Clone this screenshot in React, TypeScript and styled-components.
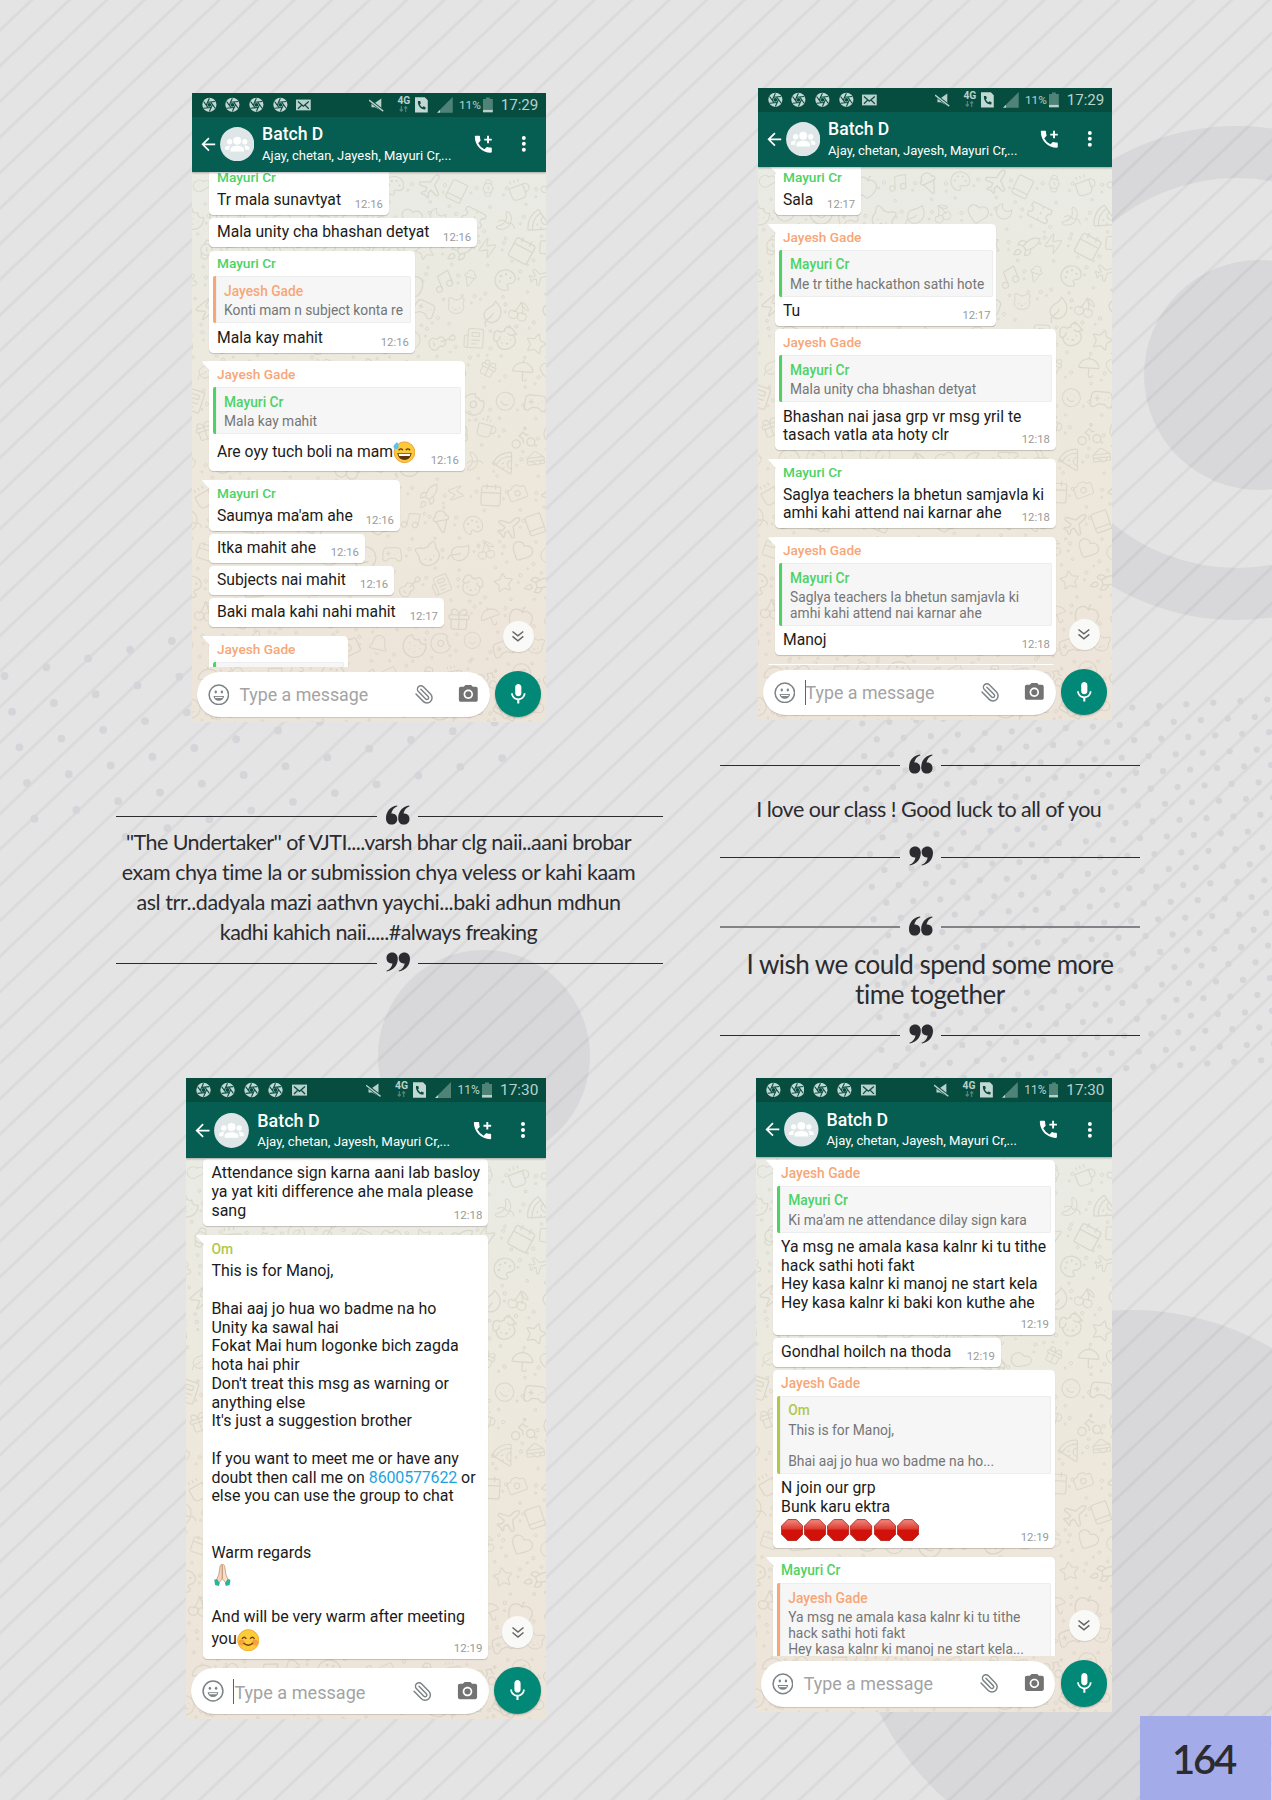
import React from "react";
import styled, { createGlobalStyle, css } from "styled-components";
import {
  Apple, Banana, Bell, Bike, Book, Calendar, Camera, Cat, Cherry, Cloud, Coffee, Compass, Cookie, Dog, Donut,
  Gamepad2, Gift, Guitar, Heart, IceCreamCone, Leaf, Moon, Music, Newspaper, Palette, Paperclip, Pizza, Plane,
  Rocket, Sandwich, Smile, Star, Ticket, Umbrella, Watch, Zap,
} from "lucide-react";
import { MdAddIcCall, MdArrowBack, MdCameraAlt, MdMic } from "react-icons/md";

const GlobalStyle = createGlobalStyle`
  body { margin: 0; background: #e4e4e4; }
  *, *::before, *::after { box-sizing: border-box; }
`;

/* Phone measurements are written in device units; --u is the size of one unit in px. */
const u = (n: number) => `calc(var(--u) * ${n})`;

const GREEN = "#4dd264";
const ORANGE = "#f7a677";
const LIME = "#b0c84a";

/* ---------- page ---------- */

const Page = styled.main`
  position: relative;
  width: 1272px;
  height: 1800px;
  overflow: hidden;
  display: grid;
  grid-template-columns: 700px 572px;
  background: #e4e4e4;
  font-family: Roboto, "Liberation Sans", sans-serif;
`;

const Backdrop = styled.svg`
  position: absolute;
  inset: 0;
`;

const Column = styled.section`
  position: relative;
  display: flex;
  flex-direction: column;
  align-items: flex-start;
`;

const PageNumber = styled.div`
  width: 131px;
  height: 84px;
  margin: auto 0 0 440px;
  display: flex;
  align-items: center;
  justify-content: center;
  background: #a4abe9;
  color: #2b2b30;
  font: 600 40px/84px Lato, sans-serif;
  letter-spacing: -2.2px;
  padding: 1px 4px 0 0;
`;

function Background() {
  const stripes: React.ReactNode[] = [];
  for (let y = -40; y < 3100; y += 35.62) {
    const y0 = y + 34.6;
    stripes.push(<line key={y} x1={-10} y1={y0 + 9.5} x2={1290} y2={y0 - 1290 * 0.95} />);
  }
  const dots: React.ReactNode[] = [];
  for (let b = 0; b <= 5; b++) {
    for (let a = b === 5 ? 2 : -1; a <= 11; a++) {
      dots.push(<circle key={`l${a}-${b}`} cx={4.5 + a * 41.83 + b * 7.5} cy={676 - a * 8.75 + b * 35.67} r={3.9} />);
    }
  }
  for (let b = 0; b <= 22; b++) {
    const half = b % 2;
    const row = (b - half) / 2;
    for (let a = 0; a <= 16; a++) {
      dots.push(
        <circle key={`r${a}-${b}`} cx={862.3 + a * 27 + row * 1.9 + half * 14.5} cy={723.5 - a * 1.6 + row * 32.65 + half * 15.9} r={3.1} />,
      );
    }
  }
  return (
    <Backdrop width="1272" height="1800" viewBox="0 0 1272 1800">
      <g fill="#d8d8da">
        <circle cx="1259" cy="375" r="115" />
        <circle cx="484" cy="1056" r="106" />
        <circle cx="1131" cy="1590" r="280" />
      </g>
      <circle cx="1237" cy="373" r="221" fill="none" stroke="#d8d8da" strokeWidth="52" />
      <g stroke="#00000f" strokeOpacity="0.04" strokeWidth="3">{stripes}</g>
      <g fill="#d5d5d9">{dots}</g>
    </Backdrop>
  );
}

/* ---------- quotes ---------- */

const QuoteBlock = styled.blockquote<{ $left: number; $top: number; $width: number; $height: number }>`
  width: ${(p) => p.$width}px;
  height: ${(p) => p.$height}px;
  margin: ${(p) => p.$top}px 0 0 ${(p) => p.$left}px;
  display: flex;
  flex-direction: column;
  justify-content: space-between;
  color: #2b2b30;
`;

const RuleRow = styled.div<{ $lead: number }>`
  display: grid;
  grid-template-columns: ${(p) => p.$lead}px 24px 1fr;
  column-gap: 8.5px;
  align-items: center;
  height: 20px;
  svg { margin-top: -2px; }
`;

const Rule = styled.span<{ $soft?: boolean }>`
  height: ${(p) => (p.$soft ? 2 : 1)}px;
  background: ${(p) => (p.$soft ? "#838287" : "#2b2b30")};
`;

const QuoteText = styled.div<{ $size: number; $pull: number; $lift: number }>`
  display: flex;
  flex-direction: column;
  align-items: center;
  font-family: Lato, sans-serif;
  font-size: ${(p) => p.$size}px;
  line-height: 30px;
  padding-right: ${(p) => p.$pull}px;
  padding-bottom: ${(p) => p.$lift}px;
`;

const QuoteLine = styled.span<{ $track: number }>`
  letter-spacing: ${(p) => p.$track}px;
  white-space: pre;
`;

function Mark({ close }: { close?: boolean }) {
  const shape = "M11 0.6 C4 1.6 0 7 0 13.2 C0 17.2 2.3 19.6 5.7 19.6 C9 19.6 11.3 17.3 11.3 14 C11.3 10.7 9.2 8.6 6.4 8.5 C6 8.5 5.6 8.5 5.3 8.6 C6 5 8 2.4 11.4 1.2 Z";
  return (
    <svg width="24" height="20" viewBox="0 0 24 20">
      <g fill="#2b2b30" transform={close ? "rotate(180 12 10)" : undefined}>
        <path d={shape} />
        <path d={shape} transform="translate(12.2 0)" />
      </g>
    </svg>
  );
}

interface QuoteProps {
  left: number; top: number; width: number; height: number; lead: number;
  size: number; pull: number; lift: number; soft?: boolean;
  lines: [string, number][];
}

function Quote(p: QuoteProps) {
  return (
    <QuoteBlock $left={p.left} $top={p.top} $width={p.width} $height={p.height}>
      <RuleRow $lead={p.lead}><Rule $soft={p.soft} /><Mark /><Rule $soft={p.soft} /></RuleRow>
      <QuoteText $size={p.size} $pull={p.pull} $lift={p.lift}>
        {p.lines.map(([t, track]) => <QuoteLine key={t} $track={track}>{t}</QuoteLine>)}
      </QuoteText>
      <RuleRow $lead={p.lead}><Rule /><Mark close /><Rule /></RuleRow>
    </QuoteBlock>
  );
}

/* ---------- phone ---------- */

const Phone = styled.article<{ $w: number; $h: number; $left: number; $top: number }>`
  --u: ${(p) => p.$w / 360}px;
  position: relative;
  width: ${(p) => p.$w}px;
  height: ${(p) => p.$h}px;
  margin: ${(p) => p.$top}px 0 0 ${(p) => p.$left}px;
  flex: none;
  display: flex;
  flex-direction: column;
  overflow: hidden;
  background: linear-gradient(#e9ebe4 12%, #eee8dc 60%, #ede4d9);
`;

const Doodles = styled.svg`
  position: absolute;
  inset: 0;
  width: 100%;
  height: 100%;
`;

const StatusBar = styled.div`
  position: relative;
  flex: none;
  height: ${u(24)};
  display: flex;
  align-items: center;
  padding: 0 ${u(8)} 0 ${u(10)};
  background: #064d40;
  color: #b9d1cb;
`;

const StatusIcon = styled.svg<{ $w: number; $gap: number }>`
  width: ${(p) => u(p.$w)};
  height: ${u(16)};
  margin-left: ${(p) => u(p.$gap)};
  flex: none;
`;

const Network = styled.div`
  margin: 0 ${u(5)} 0 ${u(14)};
  width: ${u(13)};
  display: flex;
  flex-direction: column;
  align-items: center;
  font-weight: 700;
  font-size: ${u(10.4)};
  line-height: ${u(10)};
  padding-bottom: ${u(1.5)};
`;

const StatusText = styled.span<{ $size: number; $left: number; $w: number }>`
  font-size: ${(p) => u(p.$size)};
  width: ${(p) => u(p.$w)};
  margin-left: ${(p) => u(p.$left)};
  white-space: nowrap;
`;

const AppBar = styled.header`
  position: relative;
  flex: none;
  height: ${u(56)};
  display: flex;
  align-items: center;
  padding: 0 ${u(12.6)} 0 ${u(6)};
  background: #055e51;
  color: #fff;
  box-shadow: 0 1px 2px rgba(0, 0, 0, 0.3);
  z-index: 1;
`;

const BarIcon = styled.span<{ $size: number; $gap?: number }>`
  display: flex;
  margin-left: ${(p) => u(p.$gap ?? 0)};
  svg { width: ${(p) => u(p.$size)}; height: ${(p) => u(p.$size)}; display: block; }
`;

const Titles = styled.div`
  flex: 1;
  min-width: 0;
  margin-left: ${u(8)};
  padding-top: ${u(2)};
  white-space: nowrap;
`;

const Title = styled.div`
  font-weight: 500;
  font-size: ${u(17.9)};
  line-height: ${u(22)};
`;

const Members = styled.div`
  font-size: ${u(13.25)};
  line-height: ${u(20)};
`;

const Thread = styled.div<{ $offset: number; $stretch: number }>`
  position: relative;
  flex: 1;
  min-height: 0;
  overflow: hidden;
  padding-left: ${u(17.4)};
  display: flex;
  flex-direction: column;
  align-items: flex-start;
  gap: ${(p) => p.$stretch}px;
  > :first-child { margin-top: ${(p) => p.$offset}px; }
`;

const Bubble = styled.div<{ $w: number; $tail?: boolean }>`
  position: relative;
  flex: none;
  width: ${(p) => p.$w}px;
  margin-top: ${(p) => u(p.$tail ? 8.4 : 2.7)};
  background: #fff;
  border-radius: ${(p) => (p.$tail ? 0 : u(4.5))} ${u(4.5)} ${u(4.5)} ${u(4.5)};
  box-shadow: 0 1px 1px rgba(0, 0, 0, 0.18);
  ${(p) => p.$tail && css`
    &::before {
      content: "";
      position: absolute;
      top: 0;
      left: ${u(-7)};
      width: ${u(7.5)};
      height: ${u(10.5)};
      background: linear-gradient(45deg, #c9c9c0 42%, #fff 52%);
      clip-path: polygon(0 0, 100% 0, 100% 100%, 80% 78%, 5% 14%);
    }
  `}
`;

const Sender = styled.div<{ $color: string; $tight: boolean }>`
  height: ${(p) => u(p.$tight ? 22.1 : 26.2)};
  padding: ${u(6)} 0 0 ${u(8)};
  color: ${(p) => p.$color};
  font-weight: 500;
  font-size: ${u(13.9)};
  line-height: ${u(16)};
  white-space: nowrap;
`;

const Reply = styled.div<{ $color: string }>`
  margin: 0 ${u(3.8)};
  padding: ${u(7.6)} 0 ${u(4.6)} ${u(8.4)};
  border-left: ${u(3.6)} solid ${(p) => p.$color};
  border-radius: ${u(2)};
  background: #f6f6f6;
  box-shadow: inset 0 0 0 1px #ededed;
  color: #757575;
  font-size: ${u(14)};
  line-height: ${u(15.8)};
  min-height: ${u(47)};
  white-space: pre;
`;

const ReplyName = styled.div<{ $color: string }>`
  color: ${(p) => p.$color};
  font-weight: 500;
  padding-bottom: ${u(4.2)};
`;

const Body = styled.div`
  display: flex;
  align-items: flex-end;
  padding: ${u(5.2)} ${u(6)} ${u(5.6)} ${u(8)};
`;

const Words = styled.div`
  flex: 1;
  min-width: 0;
  color: #1b1b1b;
  font-size: ${u(15.97)};
  line-height: ${u(18.75)};
  white-space: pre;
`;

const lineHeights = { text: 18.75, emoji: 26.7, stamp: 17 };

const Line = styled.div<{ $kind?: keyof typeof lineHeights }>`
  display: flex;
  align-items: center;
  height: ${(p) => u(lineHeights[p.$kind ?? "text"])};
  svg { flex: none; width: ${u(22.5)}; height: ${u(22.5)}; margin-right: ${u(0.9)}; }
`;

const Tel = styled.a`
  color: #1fa3e0;
  letter-spacing: ${u(-0.15)};
`;

const Time = styled.time`
  flex: none;
  margin-bottom: ${u(-1.8)};
  color: #9a9a9a;
  font-size: ${u(11.5)};
  line-height: ${u(13.4)};
`;

const Composer = styled.footer`
  position: relative;
  flex: none;
  height: ${u(56)};
  padding: 0 ${u(4.8)} ${u(5)} ${u(4.8)};
  display: flex;
  align-items: flex-end;
  justify-content: space-between;
`;

const Field = styled.div`
  width: ${u(298)};
  height: ${u(46)};
  border-radius: ${u(23)};
  background: #fff;
  box-shadow: 0 1px 1px rgba(0, 0, 0, 0.14);
  display: flex;
  align-items: center;
  padding: 0 ${u(10)} 0 ${u(11)};
`;

const Placeholder = styled.span<{ $cursor?: boolean }>`
  flex: 1;
  margin-left: ${(p) => u(p.$cursor ? 9.6 : 10.4)};
  border-left: ${(p) => (p.$cursor ? "1.5px solid #0a8a78" : "0")};
  height: ${u(25)};
  line-height: ${u(27)};
  font-size: ${u(18.1)};
  color: #a3a3a3;
  white-space: nowrap;
`;

const FieldIcon = styled.span<{ $gap?: number; $size: number; $flip?: boolean }>`
  display: flex;
  margin-right: ${(p) => u(p.$gap ?? 0)};
  transform: ${(p) => (p.$flip ? "scaleX(-1)" : "none")};
  svg { width: ${(p) => u(p.$size)}; height: ${(p) => u(p.$size)}; }
`;

const MicButton = styled.button`
  width: ${u(47)};
  height: ${u(47)};
  border: 0;
  padding: 0;
  border-radius: 50%;
  background: #018876;
  color: #fff;
  display: flex;
  align-items: center;
  justify-content: center;
  box-shadow: 0 1px 2px rgba(0, 0, 0, 0.25);
  svg { width: ${u(25)}; height: ${u(25)}; }
`;

const JumpButton = styled.button`
  position: absolute;
  right: ${u(12.6)};
  bottom: ${u(71.5)};
  width: ${u(31.4)};
  height: ${u(31.4)};
  border: 0;
  padding: 0;
  border-radius: 50%;
  background: #f9f9f7;
  box-shadow: 0 1px 1px rgba(0, 0, 0, 0.12);
  display: flex;
  align-items: center;
  justify-content: center;
  svg { width: ${u(14)}; height: ${u(14)}; }
`;

/* ---------- drawings ---------- */

const doodleSet = [
  Cloud, Star, Banana, Guitar, Heart, Coffee, Cat, Plane, Donut, Music, Camera, Gift, Rocket, Pizza, Newspaper, Moon,
  Bike, Leaf, Book, Smile, IceCreamCone, Bell, Umbrella, Zap, Sandwich, Dog, Ticket, Compass, Cherry, Watch,
  Gamepad2, Palette, Cookie, Apple, Calendar,
];

function Wallpaper() {
  const items: React.ReactNode[] = [];
  let n = 0;
  for (let row = 0; row < 19; row++) {
    for (let col = 0; col < 12; col++) {
      const Icon = doodleSet[(n * 11 + row * 5) % doodleSet.length];
      const x = col * 32 - (row % 2) * 16 + ((n * 7) % 5);
      const y = 82 + row * 31 + ((n * 13) % 7);
      const angle = ((n * 37) % 60) - 30;
      const size = 20 + ((n * 5) % 9);
      items.push(
        <g key={n} transform={`translate(${x} ${y}) rotate(${angle} 12 12)`}>
          <Icon size={size} strokeWidth={1.1} color="#c9c7b6" />
          <circle cx={29} cy={(n * 9) % 24} r={1.6} />
          <circle cx={26} cy={((n * 9) % 24) + 7} r={1} />
          <circle cx={4 + (n % 14)} cy={29} r={1.3} />
        </g>,
      );
      n++;
    }
  }
  return (
    <Doodles viewBox="0 0 360 640" preserveAspectRatio="none">
      <g stroke="#c9c7b6" opacity="0.5" fill="none" strokeWidth="0.9">{items}</g>
    </Doodles>
  );
}

function Aperture({ gap }: { gap: number }) {
  return (
    <StatusIcon $w={15} $gap={gap} viewBox="0 0 15 16">
      <circle cx="7.5" cy="8" r="7.2" fill="#c3d8d3" />
      <g stroke="#064d40" strokeWidth="1.1">
        {[0, 60, 120, 180, 240, 300].map((a) => <path key={a} d="M5.8 5.4 L13.4 4.6" transform={`rotate(${a} 7.5 8)`} />)}
      </g>
      <circle cx="7.5" cy="8" r="2" fill="#064d40" />
    </StatusIcon>
  );
}

function StatusIcons({ time }: { time: string }) {
  return (
    <StatusBar>
      <Aperture gap={0} /><Aperture gap={9} /><Aperture gap={9} /><Aperture gap={9.4} />
      <StatusIcon $w={15} $gap={8.6} viewBox="0 0 15 16">
        <rect x="0" y="2.6" width="15" height="11" fill="#b9d1cb" />
        <path d="M2 4.5 L7.5 9.3 L13 4.5 M2 12 L6 8 M13 12 L9 8" stroke="#064d40" strokeWidth="1.3" fill="none" />
      </StatusIcon>
      <StatusIcon $w={15} $gap={59} viewBox="0 0 15 16">
        <path d="M2.5 6 H6 L12.5 1.5 V14 L6 10.5 H2.5 Z" fill="#b9d1cb" />
        <path d="M0 3 L15 14.6" stroke="#064d40" strokeWidth="3" />
        <path d="M0 3.2 L14.5 14.4" stroke="#b9d1cb" strokeWidth="1.4" />
      </StatusIcon>
      <Network>
        4G
        <svg width="9" height="6" viewBox="0 0 9 6" fill="none" stroke="#53877c" strokeWidth="1.1">
          <path d="M2.3 0 V5 M0.7 3.5 L2.3 5.2 L3.9 3.5 M6.7 6 V0.8 M5.1 2.3 L6.7 0.6 L8.3 2.3" />
        </svg>
      </Network>
      <StatusIcon $w={13} $gap={0} viewBox="0 0 13 16">
        <path d="M0 0.3 H10 L13 3.3 V15.7 H0 Z" fill="#c3d8d3" />
        <path d="M3 4 C2.4 8.5 6 13 10.5 12.6 L10.8 10.4 L8.6 9.5 L7.6 10.4 C6.3 9.7 5.4 8.6 5 7.3 L6 6.3 L5.2 4 Z" fill="#064d40" />
      </StatusIcon>
      <StatusIcon $w={16} $gap={9} viewBox="0 0 16 16">
        <path d="M16 0 V16 H3.5 V12.5 Z" fill="#4f8378" />
        <path d="M3.3 12.7 V16 H0 Z" fill="#c3d8d3" />
      </StatusIcon>
      <StatusText $size={12} $left={6.5} $w={22}>11%</StatusText>
      <StatusIcon $w={10} $gap={2.5} viewBox="0 0 10 16">
        <path d="M3 0.5 H7 V2 H10 V13 H0 V2 H3 Z" fill="#4f8378" />
        <rect y="13" width="10" height="2.6" fill="#b9d1cb" />
      </StatusIcon>
      <StatusText $size={15.4} $left={8} $w={38}>{time}</StatusText>
    </StatusBar>
  );
}

function Avatar() {
  return (
    <svg viewBox="0 0 35 35">
      <circle cx="17.5" cy="17.5" r="17.4" fill="#dfe6e8" />
      <g fill="#fff">
        <circle cx="17.5" cy="14" r="4" />
        <circle cx="9.8" cy="15" r="2.7" />
        <circle cx="25.2" cy="15" r="2.7" />
        <path d="M10.6 24.8 V22.8 C10.6 20.4 14 19.2 17.5 19.2 C21 19.2 24.4 20.4 24.4 22.8 V24.8 Z" />
        <path d="M5 23.2 V21.6 C5 19.6 8 18.6 10.6 18.9 C9.6 20 9.2 21.3 9.3 23.2 Z" />
        <path d="M30 23.2 V21.6 C30 19.6 27 18.6 24.4 18.9 C25.4 20 25.8 21.3 25.7 23.2 Z" />
      </g>
    </svg>
  );
}

function MoreDots() {
  return (
    <svg viewBox="0 0 20 20" fill="#fff"><circle cx="10" cy="4" r="2" /><circle cx="10" cy="10" r="2" /><circle cx="10" cy="16" r="2" /></svg>
  );
}

function SmileyOutline() {
  return (
    <svg viewBox="0 0 22 22" fill="none" stroke="#7c8385" strokeWidth="1.5">
      <circle cx="11" cy="11" r="9.9" />
      <ellipse cx="7.9" cy="8.2" rx="1.2" ry="1.5" fill="#7c8385" stroke="none" />
      <ellipse cx="14.1" cy="8.2" rx="1.2" ry="1.5" fill="#7c8385" stroke="none" />
      <path d="M5.6 12.2 H16.4 C16 15.3 13.9 17 11 17 C8.1 17 6 15.3 5.6 12.2 Z" fill="#7c8385" stroke="none" />
      <path d="M7.2 13.7 H14.8" stroke="#fff" strokeWidth="1.2" />
    </svg>
  );
}

function SweatEmoji() {
  return (
    <svg viewBox="0 0 22 22">
      <circle cx="11.4" cy="11.2" r="10.3" fill="#fcc937" stroke="#e9992c" strokeWidth="0.9" />
      <path d="M5.6 9.2 Q7.6 6.4 9.8 9 M12.8 9 Q15 6.4 17 9.2" stroke="#5b3512" strokeWidth="1.3" fill="none" />
      <path d="M4.3 12 H18.5 C17.8 16.6 15 18.8 11.4 18.8 C7.8 18.8 5 16.6 4.3 12 Z" fill="#5b3512" />
      <path d="M5.4 12.8 H17.4 L16.6 14.8 H6.2 Z" fill="#fff" />
      <path d="M4 1 C5.6 3.4 6 5 5.4 6.6 C4.6 8.4 1.4 8.6 0.6 6.4 C0 4.4 2 3 4 1 Z" fill="#5cc0ec" />
    </svg>
  );
}

function BlushEmoji() {
  return (
    <svg viewBox="0 0 22 22">
      <circle cx="11" cy="11" r="10.4" fill="#fccb3a" stroke="#f0a52e" strokeWidth="0.8" />
      <circle cx="4.5" cy="13.2" r="3" fill="#f58a3c" opacity="0.65" />
      <circle cx="17.5" cy="13.2" r="3" fill="#f58a3c" opacity="0.65" />
      <path d="M4.9 9.6 Q7 6.6 9.1 9.6 M12.9 9.6 Q15 6.6 17.1 9.6" stroke="#6c3f14" strokeWidth="1.3" fill="none" />
      <path d="M6.4 13.6 Q11 18 15.6 13.6" stroke="#6c3f14" strokeWidth="1.4" fill="none" />
    </svg>
  );
}

function PrayEmoji() {
  return (
    <svg viewBox="0 0 22 22">
      <path d="M10.9 0.6 C9.6 0.4 8.9 1.2 8.8 2.6 L7.6 10.4 L5.4 15.6 L7.6 18.6 L10.9 14.6 Z" fill="#f4d3ba" stroke="#b98b6c" strokeWidth="0.7" />
      <path d="M11.3 0.6 C12.6 0.4 13.3 1.2 13.4 2.6 L14.6 10.4 L16.8 15.6 L14.6 18.6 L11.3 14.6 Z" fill="#f9e0cc" stroke="#b98b6c" strokeWidth="0.7" />
      <path d="M3.2 15.4 L5.8 14.6 L8.6 18.8 L7.6 21.6 L4 20.6 Z" fill="#28b39c" />
      <path d="M19 15.4 L16.4 14.6 L13.6 18.8 L14.6 21.6 L18.2 20.6 Z" fill="#28b39c" />
    </svg>
  );
}

function StopEmoji() {
  return (
    <svg viewBox="0 0 22 22">
      <defs>
        <linearGradient id="stopFill" x1="0" y1="0" x2="0" y2="1">
          <stop offset="0" stopColor="#f08a80" /><stop offset="0.45" stopColor="#dd3a30" />
          <stop offset="0.5" stopColor="#d0120b" /><stop offset="1" stopColor="#d3100a" />
        </linearGradient>
      </defs>
      <path d="M6.8 0.6 H15.2 L21.4 6.8 V15.2 L15.2 21.4 H6.8 L0.6 15.2 V6.8 Z" fill="url(#stopFill)" stroke="#b3271f" strokeWidth="0.9" />
    </svg>
  );
}

/* ---------- messages ---------- */

type Row = string | { emoji: React.ReactNode; text?: string } | { tel: [string, string, string] };

interface Message {
  w: number;
  tail?: boolean;
  from?: string;
  reply?: { name: string; text?: string };
  rows: Row[];
  stampRow?: boolean;
  time?: string;
}

const colors: Record<string, string> = { "Mayuri Cr": GREEN, "Jayesh Gade": ORANGE, Om: LIME };

function MessageRow({ row }: { row: Row }) {
  if (typeof row === "string") return <Line>{row}</Line>;
  if ("tel" in row) return <Line>{row.tel[0]}<Tel>{row.tel[1]}</Tel>{row.tel[2]}</Line>;
  return <Line $kind="emoji">{row.text}{row.emoji}</Line>;
}

function MessageBubble({ m }: { m: Message }) {
  return (
    <Bubble $w={m.w} $tail={m.tail}>
      {m.from && <Sender $color={colors[m.from]} $tight={!m.reply}>{m.from}</Sender>}
      {m.reply && (
        <Reply $color={colors[m.reply.name]}>
          {m.reply.text && <ReplyName $color={colors[m.reply.name]}>{m.reply.name}</ReplyName>}
          {m.reply.text}
        </Reply>
      )}
      <Body>
        <Words>
          {m.rows.map((r, i) => <MessageRow key={i} row={r} />)}
          {m.stampRow && <Line $kind="stamp" />}
        </Words>
        {m.time && <Time>{m.time}</Time>}
      </Body>
    </Bubble>
  );
}

interface ChatProps {
  w: number; h: number; left: number; top: number; offset: number; stretch: number;
  clock: string; cursor?: boolean; messages: Message[];
}

function Chat(p: ChatProps) {
  return (
    <Phone $w={p.w} $h={p.h} $left={p.left} $top={p.top}>
      <Wallpaper />
      <StatusIcons time={p.clock} />
      <AppBar>
        <BarIcon $size={21}><MdArrowBack /></BarIcon>
        <BarIcon $size={35} $gap={1.3}><Avatar /></BarIcon>
        <Titles>
          <Title>Batch D</Title>
          <Members>Ajay, chetan, Jayesh, Mayuri Cr,...</Members>
        </Titles>
        <BarIcon $size={23}><MdAddIcCall /></BarIcon>
        <BarIcon $size={20} $gap={19.8}><MoreDots /></BarIcon>
      </AppBar>
      <Thread $offset={p.offset} $stretch={p.stretch}>
        {p.messages.map((m, i) => <MessageBubble key={i} m={m} />)}
      </Thread>
      <Composer>
        <Field>
          <FieldIcon $size={22}><SmileyOutline /></FieldIcon>
          <Placeholder $cursor={p.cursor}>Type a message</Placeholder>
          <FieldIcon $size={21} $gap={23} $flip><Paperclip color="#7c8385" strokeWidth={1.7} /></FieldIcon>
          <FieldIcon $size={23}><MdCameraAlt color="#737373" /></FieldIcon>
        </Field>
        <MicButton><MdMic /></MicButton>
      </Composer>
      <JumpButton>
        <svg viewBox="0 0 14 14" fill="none" stroke="#666" strokeWidth="1.5"><path d="M1.5 2.5 L7 7 L12.5 2.5 M1.5 7.5 L7 12 L12.5 7.5" /></svg>
      </JumpButton>
    </Phone>
  );
}

const chatA: Message[] = [
  { w: 179.7, from: "Mayuri Cr", rows: ["Tr mala sunavtyat"], time: "12:16" },
  { w: 268, rows: ["Mala unity cha bhashan detyat"], time: "12:16" },
  { w: 205.7, from: "Mayuri Cr", reply: { name: "Jayesh Gade", text: "Konti mam n subject konta re" }, rows: ["Mala kay mahit"], time: "12:16" },
  { w: 255.7, tail: true, from: "Jayesh Gade", reply: { name: "Mayuri Cr", text: "Mala kay mahit" }, rows: [{ text: "Are oyy tuch boli na mam", emoji: <SweatEmoji /> }], time: "12:16" },
  { w: 190.7, tail: true, from: "Mayuri Cr", rows: ["Saumya ma'am ahe"], time: "12:16" },
  { w: 155.7, rows: ["Itka mahit ahe"], time: "12:16" },
  { w: 185, rows: ["Subjects nai mahit"], time: "12:16" },
  { w: 234.7, rows: ["Baki mala kahi nahi mahit"], time: "12:17" },
  { w: 139, tail: true, from: "Jayesh Gade", reply: { name: "Mayuri Cr" }, rows: [] },
];

const chatB: Message[] = [
  { w: 86, tail: true, from: "Mayuri Cr", rows: ["Sala"], time: "12:17" },
  { w: 221.3, tail: true, from: "Jayesh Gade", reply: { name: "Mayuri Cr", text: "Me tr tithe hackathon sathi hote" }, rows: ["Tu"], time: "12:17" },
  { w: 280.7, from: "Jayesh Gade", reply: { name: "Mayuri Cr", text: "Mala unity cha bhashan detyat" }, rows: ["Bhashan nai jasa grp vr msg yril te", "tasach vatla ata hoty clr"], time: "12:18" },
  { w: 280.7, tail: true, from: "Mayuri Cr", rows: ["Saglya teachers la bhetun samjavla ki", "amhi kahi attend nai karnar ahe"], time: "12:18" },
  { w: 280.7, tail: true, from: "Jayesh Gade", reply: { name: "Mayuri Cr", text: "Saglya teachers la bhetun samjavla ki\namhi kahi attend nai karnar ahe" }, rows: ["Manoj"], time: "12:18" },
  { w: 280.7, tail: true, rows: [""] },
];

const chatC: Message[] = [
  { w: 285, rows: ["Attendance sign karna aani lab basloy", "ya yat kiti difference ahe mala please", "sang"], time: "12:18" },
  {
    w: 285, tail: true, from: "Om", time: "12:19",
    rows: [
      "This is for Manoj,", "", "Bhai aaj jo hua wo badme na ho", "Unity ka sawal hai", "Fokat Mai hum logonke bich zagda",
      "hota hai phir", "Don't treat this msg as warning or", "anything else", "It's just a suggestion brother", "",
      "If you want to meet me or have any", { tel: ["doubt then call me on ", "8600577622", " or"] },
      "else you can use the group to chat", "", "", "Warm regards", { emoji: <PrayEmoji /> }, "",
      "And will be very warm after meeting", { text: "you", emoji: <BlushEmoji /> },
    ],
  },
];

const stops = <>{[0, 1, 2, 3, 4, 5].map((i) => <StopEmoji key={i} />)}</>;

const chatD: Message[] = [
  {
    w: 281.7, tail: true, from: "Jayesh Gade", reply: { name: "Mayuri Cr", text: "Ki ma'am ne attendance dilay sign kara" }, time: "12:19", stampRow: true,
    rows: ["Ya msg ne amala kasa kalnr ki tu tithe", "hack sathi hoti fakt", "Hey kasa kalnr ki manoj ne start kela", "Hey kasa kalnr ki baki kon kuthe ahe"],
  },
  { w: 227.7, rows: ["Gondhal hoilch na thoda"], time: "12:19" },
  { w: 281.7, from: "Jayesh Gade", reply: { name: "Om", text: "This is for Manoj,\n\nBhai aaj jo hua wo badme na ho..." }, rows: ["N join our grp", "Bunk karu ektra", { emoji: stops }], time: "12:19" },
  { w: 281.7, tail: true, from: "Mayuri Cr", reply: { name: "Jayesh Gade", text: "Ya msg ne amala kasa kalnr ki tu tithe\nhack sathi hoti fakt\nHey kasa kalnr ki manoj ne start kela..." }, rows: [] },
];

export default function App() {
  return (
    <>
      <GlobalStyle />
      <Page>
        <Background />
        <Column>
          <Chat w={354} h={629} left={192} top={93} offset={-7.2} stretch={0.5} clock="17:29" messages={chatA} />
          <Quote
            left={116} top={84} width={547} height={167} lead={261} size={21.5} pull={22} lift={6}
            lines={[
              ["''The Undertaker'' of VJTI....varsh bhar clg naii..aani brobar", -0.57],
              ["exam chya time la or submission chya veless or kahi kaam", -0.45],
              ["asl trr..dadyala mazi aathvn yaychi...baki adhun mdhun", -0.43],
              ["kadhi kahich naii.....#always freaking", -0.56],
            ]}
          />
          <Chat w={360} h={641} left={186} top={105} offset={1} stretch={0.55} clock="17:30" cursor messages={chatC} />
        </Column>
        <Column>
          <Chat w={354} h={632} left={58} top={88} offset={-2.6} stretch={0.9} clock="17:29" cursor messages={chatB} />
          <Quote
            left={20} top={35} width={420} height={112} lead={180} size={21.5} pull={2.5} lift={5}
            lines={[["I love our class ! Good luck to all of you", -0.51]]}
          />
          <Quote
            left={20} top={50} width={420} height={128} lead={180} size={26} pull={0} lift={5} soft
            lines={[["I wish we could spend some more", -0.53], ["time together", -0.42]]}
          />
          <Chat w={356} h={633.5} left={56} top={33} offset={2.5} stretch={0.35} clock="17:30" messages={chatD} />
          <PageNumber>164</PageNumber>
        </Column>
      </Page>
    </>
  );
}
